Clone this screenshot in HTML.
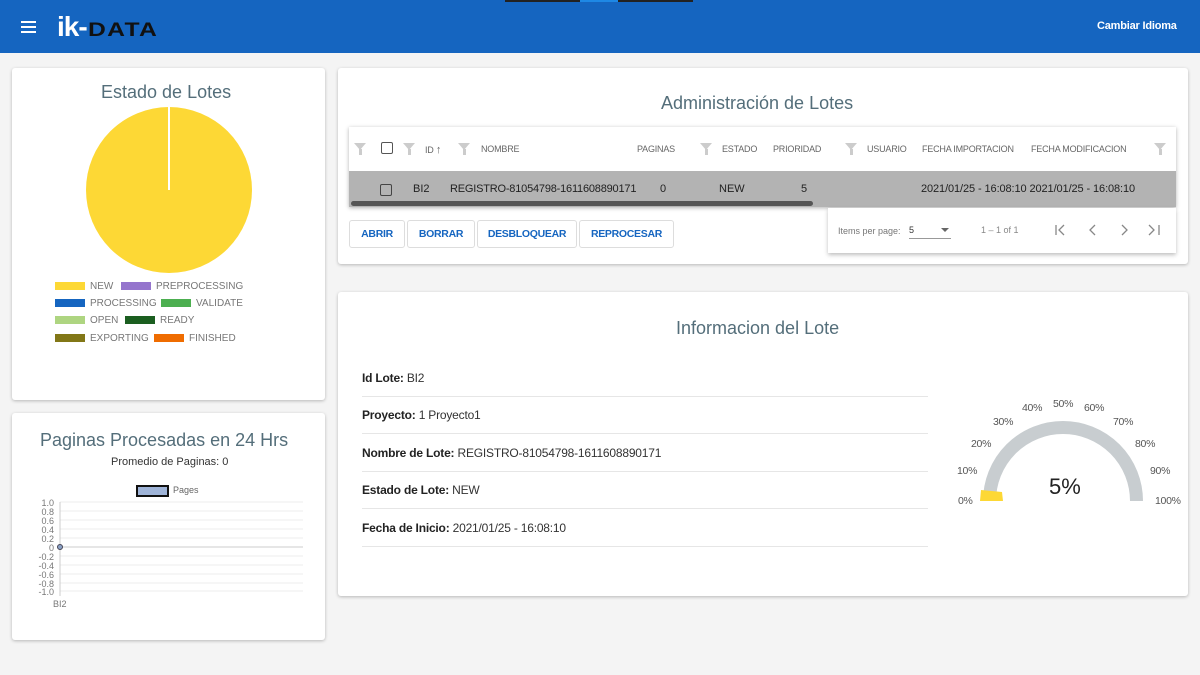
<!DOCTYPE html>
<html><head><meta charset="utf-8"><style>
*{margin:0;padding:0;box-sizing:border-box}
body{width:1200px;height:675px;background:#f4f4f4;font-family:"Liberation Sans",sans-serif;position:relative;overflow:hidden;color:#333}
.hdr{position:absolute;left:0;top:0;width:1200px;height:53px;background:#1565c0}
.card{position:absolute;background:#fff;box-shadow:0 1px 3px rgba(0,0,0,.25);border-radius:3px}
.abs{position:absolute;white-space:nowrap}
.th{position:absolute;font-size:9px;color:#666;top:144px;letter-spacing:-0.2px}
.flt{position:absolute;top:143px;width:0;height:0;border-left:6px solid transparent;border-right:6px solid transparent;border-top:7px solid #ccc}
.flt:after{content:"";position:absolute;left:-1.5px;top:-1px;width:3px;height:6px;background:#ccc}
.btn{position:absolute;top:220px;height:28px;border:1px solid #ddd;border-radius:3px;color:#1565c0;font-size:10.5px;font-weight:bold;line-height:26px;text-align:center;letter-spacing:-0.3px}
.row{position:absolute;left:362px;width:566px;font-size:12px;color:#333;border-bottom:1px solid #e6e6e6;height:38px;letter-spacing:-0.2px}
.row b{color:#222}
.lg{position:absolute;font-size:10px;color:#777}
.sw{position:absolute;width:30px;height:8px}
.gl{position:absolute;font-size:10.5px;color:#555;letter-spacing:-0.3px}
</style></head><body>
<div class="hdr">
 <div class="abs" style="left:21px;top:21px;width:15px;height:2px;background:#fff;box-shadow:0 5px 0 #fff,0 10px 0 #fff"></div>
 <div class="abs" style="left:57px;top:11px;font-size:28px;font-weight:bold;color:#fff;letter-spacing:-1px">ik-</div>
 <div class="abs" style="left:88px;top:20px;font-size:19px;font-weight:bold;color:#111;letter-spacing:1px;transform:scaleX(1.3);transform-origin:left">DATA</div>
 <div class="abs" style="left:1097px;top:20px;font-size:11px;font-weight:bold;color:#fff;letter-spacing:-0.2px">Cambiar Idioma</div>
 <div class="abs" style="left:505px;top:0;width:188px;height:2px;background:#222"></div>
 <div class="abs" style="left:580px;top:0;width:38px;height:2px;background:#1e88e5"></div>
</div>

<div class="card" style="left:12px;top:68px;width:313px;height:332px"></div>
<div class="abs" style="left:101px;top:82px;font-size:18px;color:#546e7a">Estado de Lotes</div>
<svg class="abs" style="left:86px;top:107px" width="166" height="166"><circle cx="83" cy="83" r="83" fill="#fdd835"/><line x1="83" y1="0" x2="83" y2="83" stroke="#fff" stroke-width="2"/></svg>
<div class="sw" style="left:55px;top:282px;background:#fdd835"></div><div class="lg" style="left:90px;top:281px">NEW</div>
<div class="sw" style="left:121px;top:282px;background:#9575cd"></div><div class="lg" style="left:156px;top:281px">PREPROCESSING</div>
<div class="sw" style="left:55px;top:299px;background:#1565c0"></div><div class="lg" style="left:90px;top:298px">PROCESSING</div>
<div class="sw" style="left:161px;top:299px;background:#4caf50"></div><div class="lg" style="left:196px;top:298px">VALIDATE</div>
<div class="sw" style="left:55px;top:316px;background:#aed581"></div><div class="lg" style="left:90px;top:315px">OPEN</div>
<div class="sw" style="left:125px;top:316px;background:#1b5e20"></div><div class="lg" style="left:160px;top:315px">READY</div>
<div class="sw" style="left:55px;top:334px;background:#827717"></div><div class="lg" style="left:90px;top:333px">EXPORTING</div>
<div class="sw" style="left:154px;top:334px;background:#ef6c00"></div><div class="lg" style="left:189px;top:333px">FINISHED</div>

<div class="card" style="left:12px;top:413px;width:313px;height:227px"></div>
<div class="abs" style="left:40px;top:430px;font-size:18px;color:#546e7a">Paginas Procesadas en 24 Hrs</div>
<div class="abs" style="left:111px;top:456px;font-size:11px;color:#333">Promedio de Paginas: 0</div>
<div class="abs" style="left:136px;top:485px;width:33px;height:12px;background:#9fb4d8;border:2px solid #111"></div>
<div class="abs" style="left:173px;top:485px;font-size:9px;color:#666">Pages</div>
<svg class="abs" style="left:30px;top:498px" width="280" height="115" font-family="Liberation Sans" font-size="9" fill="#777">
<g stroke="#eee"><line x1="30" y1="4" x2="273" y2="4"/><line x1="30" y1="13" x2="273" y2="13"/><line x1="30" y1="22" x2="273" y2="22"/><line x1="30" y1="31" x2="273" y2="31"/><line x1="30" y1="40" x2="273" y2="40"/><line x1="30" y1="58" x2="273" y2="58"/><line x1="30" y1="67" x2="273" y2="67"/><line x1="30" y1="76" x2="273" y2="76"/><line x1="30" y1="85" x2="273" y2="85"/><line x1="30" y1="93" x2="273" y2="93"/></g>
<line x1="30" y1="49" x2="273" y2="49" stroke="#ccc"/><line x1="30" y1="4" x2="30" y2="98" stroke="#ccc"/>
<g text-anchor="end"><text x="24" y="8">1.0</text><text x="24" y="17">0.8</text><text x="24" y="26">0.6</text><text x="24" y="35">0.4</text><text x="24" y="44">0.2</text><text x="24" y="53">0</text><text x="24" y="62">-0.2</text><text x="24" y="71">-0.4</text><text x="24" y="80">-0.6</text><text x="24" y="89">-0.8</text><text x="24" y="97">-1.0</text></g>
<text x="23" y="109">BI2</text><circle cx="30" cy="49" r="2.5" fill="#8aa0c4" stroke="#445"/></svg>

<div class="card" style="left:338px;top:68px;width:850px;height:196px"></div>
<div class="abs" style="left:661px;top:93px;font-size:18px;color:#546e7a">Administración de Lotes</div>
<div class="abs" style="left:349px;top:127px;width:827px;height:80px;box-shadow:0 1px 4px rgba(0,0,0,.3);background:#fff"></div>
<div class="abs" style="left:349px;top:171px;width:827px;height:36px;background:#b3b3b3"></div>
<div class="abs" style="left:351px;top:201px;width:462px;height:5px;background:#555;border-radius:3px"></div>
<div class="flt" style="left:354px"></div><div class="abs" style="left:381px;top:142px;width:12px;height:12px;border:1.5px solid #555;border-radius:2px"></div>
<div class="flt" style="left:403px"></div><div class="th" style="left:425px">ID <b style="font-size:11px">↑</b></div>
<div class="flt" style="left:458px"></div><div class="th" style="left:481px">NOMBRE</div>
<div class="th" style="left:637px">PAGINAS</div><div class="flt" style="left:700px"></div>
<div class="th" style="left:722px">ESTADO</div><div class="th" style="left:773px">PRIORIDAD</div>
<div class="flt" style="left:845px"></div><div class="th" style="left:867px">USUARIO</div>
<div class="th" style="left:922px">FECHA IMPORTACION</div><div class="th" style="left:1031px">FECHA MODIFICACION</div>
<div class="flt" style="left:1154px"></div>
<div class="abs" style="left:380px;top:184px;width:12px;height:12px;border:1.5px solid #444;border-radius:2px"></div>
<div class="abs" style="left:413px;top:183px;font-size:11px;color:#222">BI2</div>
<div class="abs" style="left:450px;top:183px;font-size:11px;color:#222;letter-spacing:-0.2px">REGISTRO-81054798-1611608890171</div>
<div class="abs" style="left:660px;top:183px;font-size:11px;color:#222">0</div>
<div class="abs" style="left:719px;top:183px;font-size:11px;color:#222">NEW</div>
<div class="abs" style="left:801px;top:183px;font-size:11px;color:#222">5</div>
<div class="abs" style="left:921px;top:183px;font-size:11px;color:#222;letter-spacing:-0.1px">2021/01/25 - 16:08:10 2021/01/25 - 16:08:10</div>
<div class="btn" style="left:349px;width:56px">ABRIR</div>
<div class="btn" style="left:407px;width:68px">BORRAR</div>
<div class="btn" style="left:477px;width:100px">DESBLOQUEAR</div>
<div class="btn" style="left:579px;width:95px">REPROCESAR</div>
<div class="abs" style="left:828px;top:208px;width:348px;height:45px;background:#fff;box-shadow:0 2px 4px rgba(0,0,0,.25)"></div>
<div class="abs" style="left:838px;top:226px;font-size:9px;color:#777">Items per page:</div>
<div class="abs" style="left:909px;top:225px;font-size:9px;color:#333;width:42px;border-bottom:1px solid #999;height:14px">5<span style="position:absolute;right:2px;top:3px;border-left:4px solid transparent;border-right:4px solid transparent;border-top:4px solid #666"></span></div>
<div class="abs" style="left:981px;top:225px;font-size:9px;color:#888">1 – 1 of 1</div>
<svg class="abs" style="left:1050px;top:222px" width="115" height="16" fill="none" stroke="#888" stroke-width="1.3">
<path d="M6 3v10M14 3l-5 5 5 5"/><path d="M45 3l-5 5 5 5"/><path d="M72 3l5 5-5 5"/><path d="M99 3l5 5-5 5M109 3v10"/></svg>

<div class="card" style="left:338px;top:292px;width:850px;height:304px"></div>
<div class="abs" style="left:676px;top:318px;font-size:18px;color:#546e7a">Informacion del Lote</div>
<div class="row" style="top:359px;padding-top:12px"><b>Id Lote:</b> BI2</div>
<div class="row" style="top:396px;padding-top:12px"><b>Proyecto:</b> 1 Proyecto1</div>
<div class="row" style="top:434px;padding-top:12px"><b>Nombre de Lote:</b> REGISTRO-81054798-1611608890171</div>
<div class="row" style="top:471px;padding-top:12px"><b>Estado de Lote:</b> NEW</div>
<div class="row" style="top:509px;padding-top:12px"><b>Fecha de Inicio:</b> 2021/01/25 - 16:08:10</div>
<svg class="abs" style="left:940px;top:390px" width="250" height="125">
<path d="M49.5 111 A73.5 73.5 0 0 1 196.5 111" fill="none" stroke="#c8cdd0" stroke-width="13"/>
<path d="M40 111 L63 111 L62 102 L41 100 Z" fill="#fdd835"/>
</svg>
<div class="abs" style="left:1049px;top:474px;font-size:22px;color:#222">5%</div>
<div class="gl" style="left:958px;top:495px">0%</div><div class="gl" style="left:957px;top:465px">10%</div>
<div class="gl" style="left:971px;top:438px">20%</div><div class="gl" style="left:993px;top:416px">30%</div>
<div class="gl" style="left:1022px;top:402px">40%</div><div class="gl" style="left:1053px;top:398px">50%</div>
<div class="gl" style="left:1084px;top:402px">60%</div><div class="gl" style="left:1113px;top:416px">70%</div>
<div class="gl" style="left:1135px;top:438px">80%</div><div class="gl" style="left:1150px;top:465px">90%</div>
<div class="gl" style="left:1155px;top:495px">100%</div>
</body></html>
